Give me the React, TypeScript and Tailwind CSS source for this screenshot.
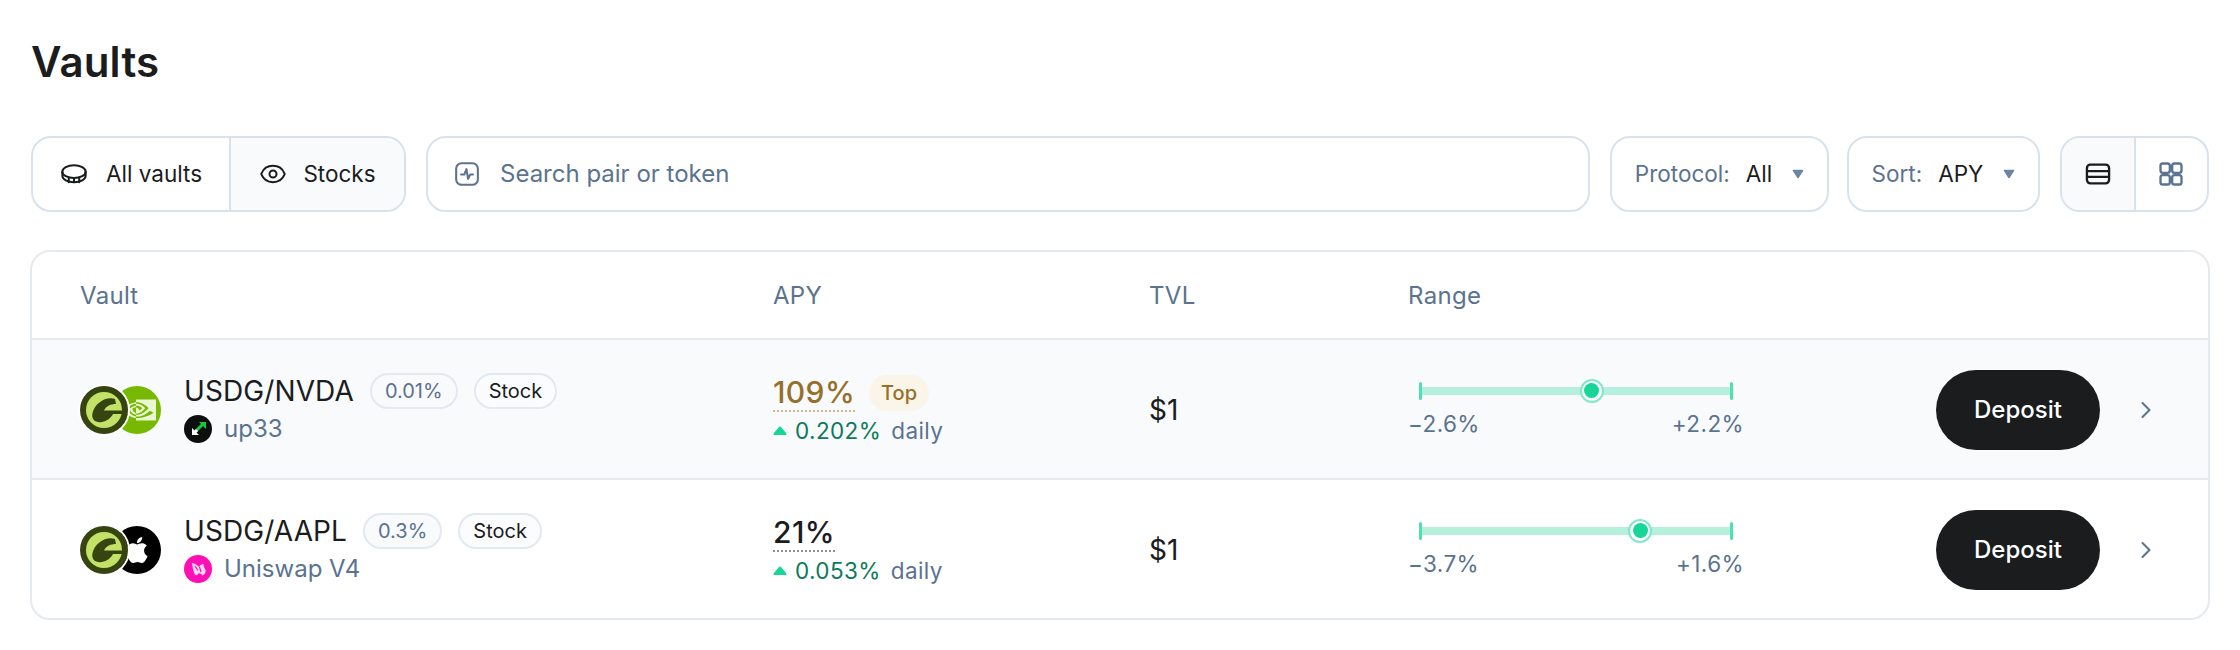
import { Eye, ChevronRight } from "lucide-react";
import { SiApple, SiNvidia } from "react-icons/si";

type Vault = {
  pair: string;
  fee: string;
  protocol: string;
  logo: "nvda" | "aapl";
  apy: string;
  top?: boolean;
  daily: string;
  low: string;
  high: string;
  position: number;
};

const vaults: Vault[] = [
  { pair: "USDG/NVDA", fee: "0.01%", protocol: "up33", logo: "nvda", apy: "109%", top: true, daily: "0.202%", low: "−2.6%", high: "+2.2%", position: 55 },
  { pair: "USDG/AAPL", fee: "0.3%", protocol: "Uniswap V4", logo: "aapl", apy: "21%", daily: "0.053%", low: "−3.7%", high: "+1.6%", position: 70.5 },
];

function CoinIcon() {
  return (
    <svg width="28" height="28" viewBox="0 0 24 24" fill="none" stroke="#1a1c1e" strokeWidth="1.7" strokeLinecap="round" strokeLinejoin="round">
      <ellipse cx="12" cy="10" rx="10" ry="5.5" />
      <path d="M2 10v3.5C2 16.5 6.5 19 12 19s10-2.500 10-5.500V10" />
      <path d="M7.500 15v4M12 15.500V19M16.500 15v4" />
    </svg>
  );
}

function PulseIcon() {
  return (
    <svg width="26" height="26" viewBox="0 0 24 24" fill="none" stroke="#5a7390" strokeWidth="1.9" strokeLinecap="round" strokeLinejoin="round">
      <rect x="2" y="2" width="20" height="20" rx="5" />
      <path d="M6.500 12.500h3l2-5 1.500 9 2-4h2.500" />
    </svg>
  );
}

function RowsIcon() {
  return (
    <svg width="28" height="28" viewBox="0 0 24 24" fill="none" stroke="#1a1c1e" strokeWidth="2">
      <rect x="2.500" y="4" width="19" height="16" rx="3" />
      <path d="M2.500 9.500h19M2.500 14.500h19" />
    </svg>
  );
}

function GridIcon() {
  return (
    <svg width="28" height="28" viewBox="0 0 24 24" fill="none" stroke="#5a7390" strokeWidth="2">
      <rect x="3" y="3" width="8" height="8" rx="2" />
      <rect x="13" y="3" width="8" height="8" rx="2" />
      <rect x="3" y="13" width="8" height="8" rx="2" />
      <rect x="13" y="13" width="8" height="8" rx="2" />
    </svg>
  );
}

function Caret() {
  return (
    <svg width="12" height="10" viewBox="0 0 12 10" className="ml-1">
      <path d="M1.500 1.500h9L6 8.500z" fill="#6b86a3" stroke="#6b86a3" strokeWidth="1.500" strokeLinejoin="round" />
    </svg>
  );
}

function GLogo() {
  return (
    <svg width="48" height="48" viewBox="0 0 48 48" className="block">
      <circle cx="24" cy="24" r="24" fill="#36450f" />
      <circle cx="24" cy="24" r="18" fill="#c4e268" />
      <path d="M35 13C26 10 15 17 12.500 27 11 34 16 37 22 36 27 35 31 32 33 28H44V24.500H24C26 20 31 18 36 18z" fill="#36450f" />
    </svg>
  );
}

function Up33Logo() {
  return (
    <svg width="28" height="28" viewBox="0 0 28 28" className="shrink-0">
      <circle cx="14" cy="14" r="14" fill="#0c0f0d" />
      <path d="M15 7h7v7z" fill="#16c83c" />
      <path d="M12 16l7-7" stroke="#16c83c" strokeWidth="3" />
      <path d="M8 13v7h7z" fill="#fff" />
      <path d="M10 18l3-3" stroke="#fff" strokeWidth="3" />
    </svg>
  );
}

function UniswapLogo() {
  return (
    <svg width="28" height="28" viewBox="0 0 28 28" className="shrink-0">
      <circle cx="14" cy="14" r="14" fill="#fc0fb5" />
      <path d="M8 8c3 .5 5 2 7 4 1-2 3-3 4.500-3-.5 2 1 3.500 2 6 .5 2.500-.5 4.500-3 5.500-1.500-1.500-2.500-2.500-4-2-1 1.500-2 2-3.500 1.500C9.500 17 8.500 12 8 8z" fill="#ffd9f3" />
      <path d="M11 11l3 4.500M15.500 12l1.500 5" stroke="#fc0fb5" strokeWidth="1.200" />
    </svg>
  );
}

function PairLogo({ logo }: { logo: Vault["logo"] }) {
  return (
    <div className="flex w-[104px] shrink-0">
      <div className="relative z-10 rounded-full ring-2 ring-white">
        <GLogo />
      </div>
      {logo === "nvda" ? (
        <div className="-ml-[15px] flex h-[48px] w-[48px] items-center justify-center rounded-full bg-[#76b900]">
          <SiNvidia size={32} color="#eaf6d2" className="-mr-[6px]" />
        </div>
      ) : (
        <div className="-ml-[15px] flex h-[48px] w-[48px] items-center justify-center rounded-full bg-black">
          <SiApple size={26} color="#fff" />
        </div>
      )}
    </div>
  );
}

function RangeBar({ vault }: { vault: Vault }) {
  return (
    <div className="w-[336px] pb-[2px]">
      <div className="relative mx-[11px] flex h-[18px] items-center">
        <div className="h-[18px] w-[3px] rounded-full bg-[#4fe0b0]" />
        <div className="h-[8px] flex-1 bg-[#b5f0dc]" />
        <div className="h-[18px] w-[3px] rounded-full bg-[#4fe0b0]" />
        <div
          className="absolute top-1/2 flex h-[24px] w-[24px] -translate-x-1/2 -translate-y-1/2 items-center justify-center rounded-full border-2 border-[#7fe8c8] bg-white"
          style={{ left: `${vault.position}%` }}
        >
          <div className="h-[15px] w-[15px] rounded-full bg-[#17d698]" />
        </div>
      </div>
      <div className="mt-[11px] flex justify-between text-[22.5px] leading-[26px] tracking-[0.4px] text-[#5a7390]">
        <span>{vault.low}</span>
        <span>{vault.high}</span>
      </div>
    </div>
  );
}

function VaultRow({ vault, shaded }: { vault: Vault; shaded: boolean }) {
  return (
    <div className={`flex h-[140px] items-center border-t-2 border-[#e5eaef] pl-[48px] pr-[48px] pt-[2px] ${shaded ? "bg-[#f8fafc]" : ""}`}>
      <div className="flex w-[693px] items-center">
        <PairLogo logo={vault.logo} />
        <div>
          <div className="flex items-center">
            <span className="text-[28px] leading-[36px] tracking-[0.1px] text-[#1a1c1e]">{vault.pair}</span>
            <span className="ml-[16px] flex h-[36px] items-center rounded-full border-2 border-[#e3e9ef] bg-[#f8fafc] px-[13px] text-[20px] text-[#5a7390]">{vault.fee}</span>
            <span className="ml-[16px] flex h-[36px] items-center rounded-full border-2 border-[#e3e9ef] bg-[#fbfcfd] px-[13px] text-[20px] text-[#1a1c1e]">Stock</span>
          </div>
          <div className="mt-[2px] flex items-center gap-[12px]">
            {vault.logo === "nvda" ? <Up33Logo /> : <UniswapLogo />}
            <span className="text-[24px] leading-[36px] text-[#5a7390]">{vault.protocol}</span>
          </div>
        </div>
      </div>
      <div className="w-[376px]">
        <div className="flex items-center gap-[14px]">
          <span className={`border-b-2 border-dotted text-[30px] font-medium leading-[36px] tracking-[0.4px] ${vault.top ? "border-[#cdb88f] text-[#96702a]" : "border-[#8c9096] text-[#1a1c1e]"}`}>{vault.apy}</span>
          {vault.top && <span className="flex h-[36px] items-center rounded-full bg-[#faf5e8] px-[12px] text-[20px] font-medium text-[#96702a]">Top</span>}
        </div>
        <div className="mt-[3px] flex items-center text-[22.5px] leading-[32px] tracking-[0.4px]">
          <svg width="14" height="10" viewBox="0 0 14 10" className="mr-[8px]">
            <path d="M7 1.500L12.500 8h-11z" fill="#17d698" stroke="#17d698" strokeWidth="2" strokeLinejoin="round" />
          </svg>
          <span className="text-[#0b7a5a]">{vault.daily}</span>
          <span className="ml-[10px] text-[#5a7390]">daily</span>
        </div>
      </div>
      <div className="w-[259px] text-[28px] text-[#1a1c1e]">$1</div>
      <RangeBar vault={vault} />
      <button type="button" className="ml-auto h-[80px] w-[164px] rounded-full bg-[#1a1c1e] text-[24px] font-medium text-white">
        Deposit
      </button>
      <ChevronRight className="ml-[32px]" size={28} strokeWidth={1.75} color="#5a7390" />
    </div>
  );
}

export default function App() {
  return (
    <div className="min-h-[650px] bg-white px-[30px] font-['Inter','Liberation_Sans',sans-serif] text-[#1a1c1e]">
      <h1 className="ml-[1px] pt-[36px] text-[42px] font-semibold leading-[52px] tracking-[0.2px]">Vaults</h1>

      <div className="ml-[1px] mr-[1px] mt-[48px] flex h-[76px] gap-[20px] text-[22.5px]">
        <div className="flex overflow-hidden rounded-[20px] border-2 border-[#d9e2ec]">
          <div className="flex w-[198px] items-center justify-center gap-[18px] border-r-2 border-[#d9e2ec]">
            <CoinIcon />
            All vaults
          </div>
          <div className="flex w-[173px] items-center justify-center gap-[16px] bg-[#f8fafc]">
            <Eye size={28} strokeWidth={1.7} />
            Stocks
          </div>
        </div>
        <div className="flex flex-1 items-center gap-[20px] rounded-[20px] border-2 border-[#d9e2ec] pl-[26px] text-[24px] text-[#5a7390]">
          <PulseIcon />
          <span>Search pair or token</span>
        </div>
        <div className="flex w-[219px] items-center justify-center gap-[16px] rounded-[20px] border-2 border-[#d9e2ec] text-[22.5px]">
          <span className="text-[#5a7390]">Protocol:</span>
          <span>All</span>
          <Caret />
        </div>
        <div className="-ml-[2px] flex w-[193px] items-center justify-center gap-[16px] rounded-[20px] border-2 border-[#d9e2ec] text-[22.5px]">
          <span className="text-[#5a7390]">Sort:</span>
          <span>APY</span>
          <Caret />
        </div>
        <div className="flex w-[149px] overflow-hidden rounded-[20px] border-2 border-[#d9e2ec]">
          <div className="flex flex-1 items-center justify-center border-r-2 border-[#d9e2ec] bg-[#f8fafc]">
            <RowsIcon />
          </div>
          <div className="flex flex-1 items-center justify-center">
            <GridIcon />
          </div>
        </div>
      </div>

      <div className="mt-[38px] overflow-hidden rounded-[20px] border-2 border-[#e5eaef]">
        <div className="flex h-[86px] items-center pl-[48px] pt-[2px] text-[24px] tracking-[0.3px] text-[#5a7390]">
          <div className="w-[693px]">Vault</div>
          <div className="w-[376px]">APY</div>
          <div className="w-[259px]">TVL</div>
          <div>Range</div>
        </div>
        {vaults.map((vault, index) => (
          <VaultRow key={vault.pair} vault={vault} shaded={index === 0} />
        ))}
      </div>
    </div>
  );
}
